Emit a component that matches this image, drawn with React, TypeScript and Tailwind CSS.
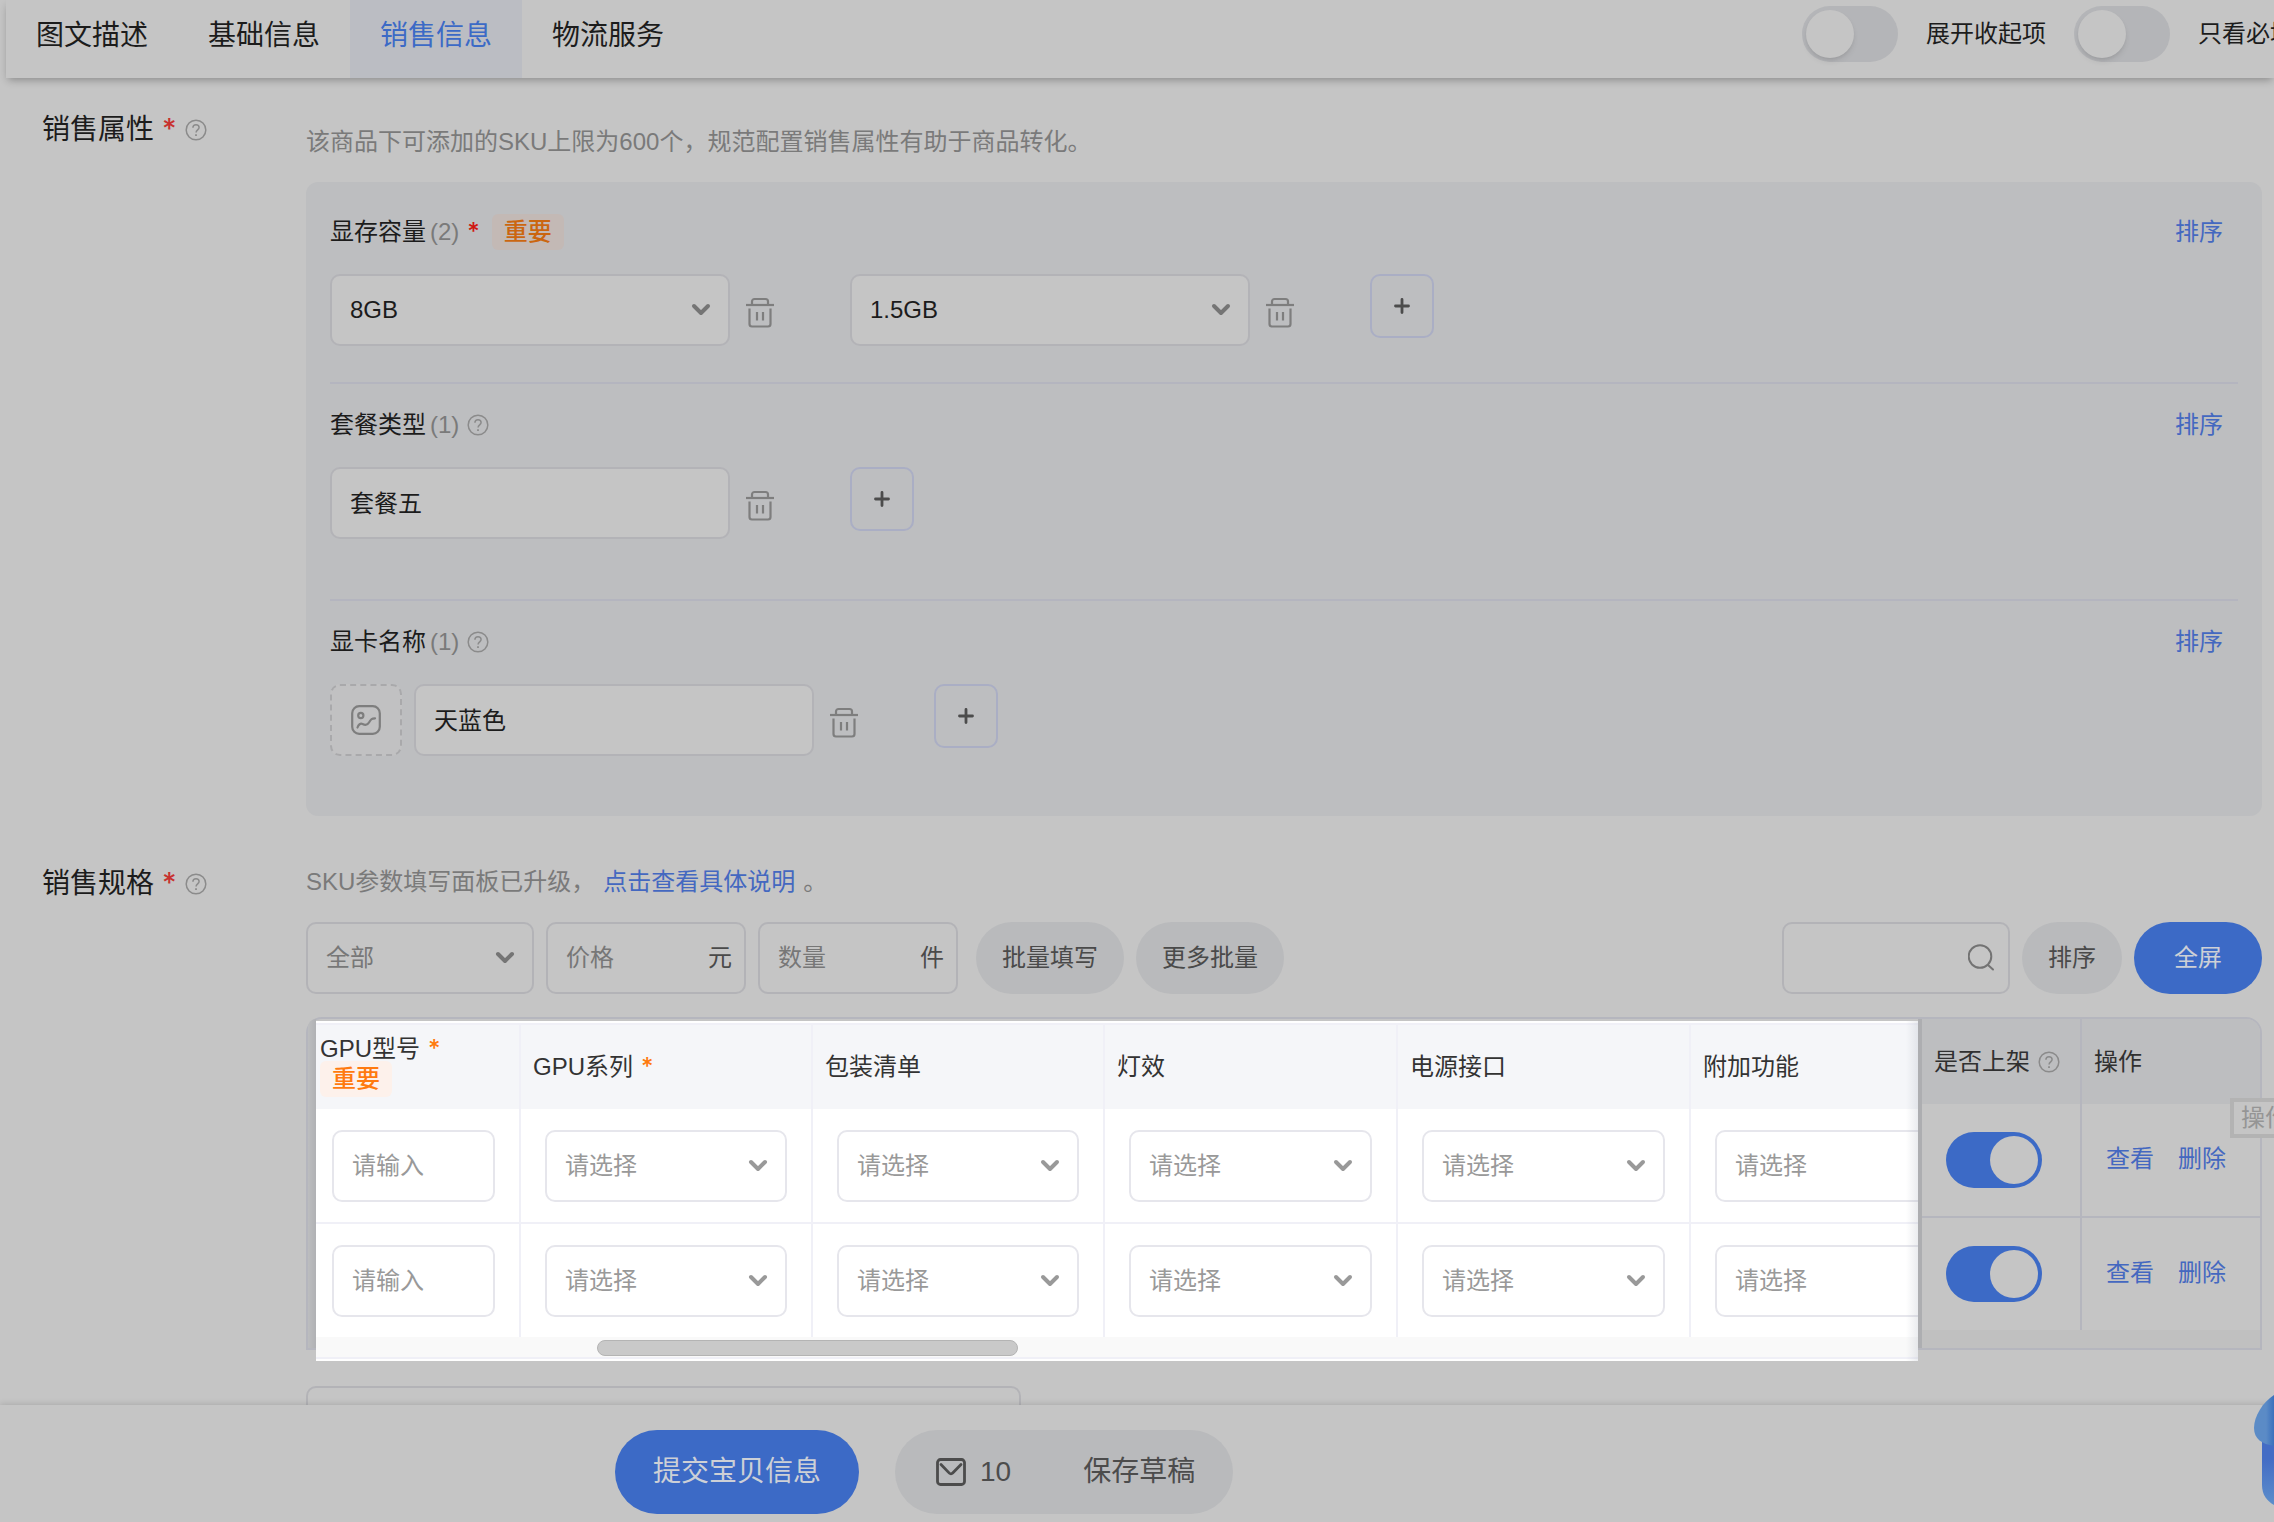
import React, { useState } from 'react';
import clsx from 'clsx';

const FONT = "font-['Liberation_Sans','Noto_Sans_CJK_SC',sans-serif]";

const TABS = ['图文描述', '基础信息', '销售信息', '物流服务'];

const SPEC_COLUMNS = [
  { key: 'gpuModel', label: 'GPU型号', required: true, important: true, type: 'input' },
  { key: 'gpuSeries', label: 'GPU系列', required: true, important: false, type: 'select' },
  { key: 'packing', label: '包装清单', required: false, important: false, type: 'select' },
  { key: 'lighting', label: '灯效', required: false, important: false, type: 'select' },
  { key: 'power', label: '电源接口', required: false, important: false, type: 'select' },
  { key: 'extra', label: '附加功能', required: false, important: false, type: 'select' }
];

const ROWS = [0, 1];

function ChevronIcon({ className = '' }: { className?: string }) {
  return (
    <svg viewBox="0 0 20 14" fill="none" stroke="currentColor" strokeWidth="4" strokeLinecap="round" strokeLinejoin="round" className={clsx('pointer-events-none h-[14px] w-5', className)}>
      <path d="M3 3l7 7 7-7" />
    </svg>
  );
}

function HelpIcon() {
  return (
    <svg viewBox="0 0 22 22" fill="none" stroke="currentColor" strokeWidth="1.5" className="h-[22px] w-[22px] shrink-0 text-[#8b8b8b]">
      <circle cx="11" cy="11" r="9.8" />
      <path d="M7.9 8.8c0-1.9 1.3-3.1 3.1-3.1s3.1 1.1 3.1 2.8c0 2.3-3 2.5-3 5" />
      <path d="M11 15.2v1.8" strokeWidth="1.8" />
    </svg>
  );
}

function TrashIcon() {
  return (
    <svg viewBox="0 0 28 36" fill="none" stroke="currentColor" strokeWidth="2.2" strokeLinejoin="round" className="h-9 w-7">
      <path d="M0 13h28" />
      <path d="M6 13V9.5A2.5 2.5 0 0 1 8.5 7h11A2.5 2.5 0 0 1 22 9.5V13" />
      <path d="M3.5 16.5V32a2.5 2.5 0 0 0 2.500 2.500h16a2.500 2.500 0 0 0 2.500-2.500V16.500" />
      <path d="M11 20v8.500M17 20v8.500" />
    </svg>
  );
}

function PictureIcon() {
  return (
    <svg viewBox="0 0 30 30" fill="none" stroke="currentColor" strokeWidth="2.200" strokeLinecap="round" className="h-[30px] w-[30px]">
      <rect x="1.200" y="1.200" width="27.600" height="27.600" rx="7" />
      <circle cx="9.800" cy="10.500" r="2.600" />
      <path d="M6.500 22.500c1-3 3-4.500 5-3.500s4.500 2 6.500-1.500 3-4 6-4.200" />
    </svg>
  );
}

function SearchIcon() {
  return (
    <svg viewBox="0 0 28 28" fill="none" stroke="currentColor" strokeWidth="2" strokeLinecap="round" className="pointer-events-none absolute right-[14px] top-[21px] h-7 w-7 text-[#737373]">
      <circle cx="12" cy="13.500" r="11.300" />
      <path d="M20 22l5 4.500" />
    </svg>
  );
}

function MailIcon() {
  return (
    <svg viewBox="0 0 30 28" fill="none" stroke="currentColor" strokeWidth="2.800" strokeLinejoin="round" strokeLinecap="round" className="h-7 w-[30px]">
      <rect x="1.500" y="1.500" width="27" height="25" rx="3" />
      <path d="M5 6.500l8.300 8.600a2.400 2.400 0 0 0 3.400 0L25 6.500" />
    </svg>
  );
}

function Star({ className = '' }: { className?: string }) {
  return <span className={clsx("font-['Inter'] font-medium", className)}>*</span>;
}

function Toggle({ label, defaultChecked = false }: { label: string; defaultChecked?: boolean }) {
  return (
    <input
      type="checkbox"
      role="switch"
      aria-label={label}
      defaultChecked={defaultChecked}
      className="block h-14 w-24 shrink-0 cursor-pointer appearance-none rounded-full bg-[#b4b5b8] p-1 before:block before:h-12 before:w-12 before:rounded-full before:bg-[#c5c5c5] before:shadow-md checked:bg-[#3c6ac6] checked:before:ml-10 checked:before:shadow-none"
    />
  );
}

function SelectBox({ label, value, className = '', light = false, muted = false }: { label: string; value: string; className?: string; light?: boolean; muted?: boolean }) {
  return (
    <div className={clsx('relative', className)}>
      <select
        aria-label={label}
        className={clsx(
          'h-[72px] w-full appearance-none rounded-[10px] border-2 pl-[18px] pr-12 text-2xl outline-none',
          light && 'border-[#e6e6ec] bg-white text-[#999]',
          !light && 'border-[#b3b3b7] bg-[#c5c5c5]',
          !light && (muted ? 'text-[#777]' : 'text-[#1c1c1c]')
        )}
      >
        <option>{value}</option>
      </select>
      <ChevronIcon className={clsx('absolute right-[19px] top-[29px]', light ? 'text-[#999]' : 'text-[#757575]')} />
    </div>
  );
}

function TextBox({ label, value }: { label: string; value: string }) {
  return (
    <input
      type="text"
      defaultValue={value}
      aria-label={label}
      className="h-[72px] w-[400px] rounded-[10px] border-2 border-[#b3b3b7] bg-[#c5c5c5] px-[18px] pb-1 text-[#1c1c1c] outline-none"
    />
  );
}

function TrashButton() {
  return (
    <button type="button" aria-label="删除" className="shrink-0 text-[#7e7e7e]">
      <TrashIcon />
    </button>
  );
}

function AddButton() {
  return (
    <button type="button" aria-label="添加" className="flex h-16 w-16 shrink-0 items-center justify-center rounded-[10px] border-2 border-[#aaaec4] text-[#4c4c4c]">
      <svg viewBox="0 0 16 16" stroke="currentColor" strokeWidth="2.800" strokeLinecap="round" className="h-4 w-4">
        <path d="M8 1.500v13M1.500 8h13" />
      </svg>
    </button>
  );
}

function ImportantTag({ light = false }: { light?: boolean }) {
  return (
    <span className={clsx('inline-block h-9 rounded-md px-3 text-2xl font-medium leading-9', light ? 'bg-[#fdf1eb] text-[#ff7a0f]' : 'bg-[#c3b9b5] text-[#cb6610]')}>
      重要
    </span>
  );
}

function PropertyRow({ title, count, required = false, first = false, last = false, children }: { title: string; count: number; required?: boolean; first?: boolean; last?: boolean; children: React.ReactNode }) {
  return (
    <div className={clsx(first ? 'pb-9 pt-8' : 'pb-[60px] pt-[23px]', !last && 'border-b-2 border-[#b4b5bf]')}>
      <div className="mb-6 flex h-9 items-center justify-between pr-[15px]">
        <div className="flex items-center">
          <h3 className="text-[#1c1c1c]">{title}</h3>
          <span className="ml-1 text-[#7a7a7a]">({count})</span>
          {required ? (
            <>
              <Star className="ml-2 mr-3 text-[#d01712]" />
              <ImportantTag />
            </>
          ) : (
            <span className="ml-2"><HelpIcon /></span>
          )}
        </div>
        <button type="button" className="text-[#4468c0]">排序</button>
      </div>
      <div className="flex gap-[76px]">{children}</div>
    </div>
  );
}

function SectionLabel({ children }: { children: React.ReactNode }) {
  return (
    <div className="flex h-10 w-[306px] shrink-0 items-center pl-[42px]">
      <h2 className="text-[28px] text-[#1c1c1c]">{children}</h2>
      <Star className="ml-2 mr-2 text-[28px] text-[#c8322f]" />
      <HelpIcon />
    </div>
  );
}

function UnitField({ label, unit }: { label: string; unit: string }) {
  return (
    <label className="flex h-[72px] w-[200px] items-center rounded-[10px] border-2 border-[#b3b3b7] pl-[18px] pr-3">
      <input type="text" placeholder={label} aria-label={label} className="w-full min-w-0 bg-transparent outline-none placeholder:text-[#777]" />
      <span className="text-[#4a4a4a]">{unit}</span>
    </label>
  );
}

function SpecTable() {
  return (
    <div className="relative z-10 mt-0.5 h-[340px] min-w-0 flex-1 overflow-hidden bg-white pt-0.5">
      <table className="w-[1668px] table-fixed border-separate border-spacing-0">
        <colgroup>
          <col className="w-[205px]" />
          <col className="w-[292px]" />
          <col className="w-[292px]" />
          <col className="w-[293px]" />
          <col className="w-[293px]" />
          <col className="w-[293px]" />
        </colgroup>
        <thead>
          <tr className="h-[86px] bg-[#f5f6f9]">
            {SPEC_COLUMNS.map((col) => (
              <th key={col.key} className={clsx('border-r-2 border-t-2 border-r-[#f0f0f7] border-t-[#f0f0f7] p-0 text-left font-normal text-[#333]', col.important ? 'pl-1' : 'pl-3')}>
                <div className={clsx(col.important && 'leading-6')}>
                  {col.label}
                  {col.required && <Star className="ml-2 text-[#ff7a0f]" />}
                </div>
                {col.important && <ImportantTag light />}
              </th>
            ))}
          </tr>
        </thead>
        <tbody>
          {ROWS.map((row) => (
            <tr key={row} className={row === 0 ? 'h-[115px]' : 'h-[113px]'}>
              {SPEC_COLUMNS.map((col) => (
                <td key={col.key} className={clsx('border-r-2 border-[#f0f0f7] p-0', row === 0 && 'border-b-2', col.type === 'input' ? 'pl-4 pr-6' : 'px-6')}>
                  {col.type === 'input' ? (
                    <input type="text" placeholder="请输入" aria-label={`${col.label}${row + 1}`} className="block h-[72px] w-full rounded-[10px] border-2 border-[#e6e6ec] px-[18px] outline-none placeholder:text-[#999]" />
                  ) : (
                    <SelectBox light label={`${col.label}${row + 1}`} value="请选择" />
                  )}
                </td>
              ))}
            </tr>
          ))}
        </tbody>
      </table>
      <div className="h-[22px] border-b-2 border-[#f0f0f7] bg-[#f9f9f9] pt-[3px]">
        <div className="ml-[281px] h-4 w-[421px] rounded-full border border-[#b4b4b4] bg-[#c9c9c9]" />
      </div>
      <div className="absolute inset-y-0 right-0 w-3 bg-linear-to-r from-transparent to-gray-400/20" />
    </div>
  );
}

// Columns pinned to the right of the spec table
function ActionTable() {
  return (
    <div className="shrink-0">
      <table className="w-[338px] table-fixed border-separate border-spacing-0">
        <colgroup>
          <col className="w-[160px]" />
          <col className="w-[178px]" />
        </colgroup>
        <thead>
          <tr className="h-[85px] text-left text-[#303030]">
            <th className="border-r-2 border-[#b5b6be] bg-[#bdbec0] p-0 pl-3 font-normal">
              <div className="flex items-center gap-2 whitespace-nowrap">
                是否上架
                <HelpIcon />
              </div>
            </th>
            <th className="rounded-tr-[14px] bg-[#bdbec0] p-0 pl-3 font-normal">操作</th>
          </tr>
        </thead>
        <tbody>
          {ROWS.map((row) => (
            <tr key={row} className={row === 0 ? 'h-[114px]' : 'h-[112px]'}>
              <td className={clsx('border-r-2 border-[#b5b6be] p-0 pl-6', row === 0 && 'border-b-2')}>
                <Toggle label="是否上架" defaultChecked />
              </td>
              <td className={clsx('border-[#b5b6be] p-0 pl-6', row === 0 && 'border-b-2')}>
                <div className="flex gap-6 pb-0.5 text-[#4468c0]">
                  <a href="#view">查看</a>
                  <a href="#delete">删除</a>
                </div>
              </td>
            </tr>
          ))}
        </tbody>
      </table>
      <div className="h-[18px] bg-[#c0c0c0]" />
    </div>
  );
}

export default function App() {
  const [activeTab, setActiveTab] = useState('销售信息');

  return (
    <div className={clsx('relative flex h-screen flex-col overflow-hidden bg-[#c5c5c5] text-2xl', FONT)}>
      {/* Tabs */}
      <header className="relative z-20 ml-1.5 flex h-[78px] shrink-0 justify-between bg-[#c5c5c5] shadow-[0_4px_8px_-2px_rgba(0,0,0,0.3)]">
        <nav className="flex">
          {TABS.map((tab) => (
            <button
              key={tab}
              type="button"
              onClick={() => setActiveTab(tab)}
              className={clsx('w-[172px] pb-1.5 text-[28px]', tab === activeTab ? 'bg-[#bbbdc3] text-[#3c6ac6]' : 'text-[#1c1c1c]')}
            >
              {tab}
            </button>
          ))}
        </nav>
        <div className="-mr-11 flex items-center gap-7 whitespace-nowrap pb-2.5 text-[#1c1c1c]">
          <Toggle label="展开收起项" />
          <span>展开收起项</span>
          <Toggle label="只看必填项" />
          <span>只看必填项</span>
        </div>
      </header>

      <main className="min-h-0 flex-1 overflow-hidden">
        {/* Sales attributes */}
        <section className="flex pr-3 pt-8">
          <SectionLabel>销售属性</SectionLabel>
          <div className="min-w-0 flex-1 pt-[14px]">
            <p className="mb-[22px] h-9 leading-9 text-[#7a7a7a]">该商品下可添加的SKU上限为600个，规范配置销售属性有助于商品转化。</p>
            <div className="rounded-xl bg-[#bdbec0] px-6">
              <PropertyRow title="显存容量" count={2} required first>
                <div className="flex items-center gap-4">
                  <SelectBox label="显存容量1" value="8GB" className="w-[400px]" />
                  <TrashButton />
                </div>
                <div className="flex items-center gap-4">
                  <SelectBox label="显存容量2" value="1.5GB" className="w-[400px]" />
                  <TrashButton />
                </div>
                <AddButton />
              </PropertyRow>
              <PropertyRow title="套餐类型" count={1}>
                <div className="flex items-center gap-4">
                  <TextBox label="套餐类型" value="套餐五" />
                  <TrashButton />
                </div>
                <AddButton />
              </PropertyRow>
              <PropertyRow title="显卡名称" count={1} last>
                <div className="flex items-center gap-4">
                  <div className="flex gap-3">
                    <button type="button" aria-label="上传图片" className="flex h-[72px] w-[72px] items-center justify-center rounded-[10px] border-2 border-dashed border-[#a9a9ab] bg-[#c1c1c2] text-[#7e7e7e]">
                      <PictureIcon />
                    </button>
                    <TextBox label="显卡名称" value="天蓝色" />
                  </div>
                  <TrashButton />
                </div>
                <AddButton />
              </PropertyRow>
            </div>
          </div>
        </section>

        {/* Sales specs */}
        <section className="flex pr-3 pt-12">
          <SectionLabel>销售规格</SectionLabel>
          <div className="min-w-0 flex-1">
            <p className="mb-[22px] h-9 leading-9 text-[#7a7a7a]">
              SKU参数填写面板已升级，
              <a href="#guide" className="mx-2 text-[#4468c0]">点击查看具体说明</a>
              。
            </p>

            <div className="mb-[23px] flex items-center justify-between">
              <div className="flex items-center gap-3">
                <SelectBox muted label="规格筛选" value="全部" className="w-[228px]" />
                <UnitField label="价格" unit="元" />
                <UnitField label="数量" unit="件" />
                <button type="button" className="ml-1.5 h-[72px] w-[148px] rounded-full bg-[#b9babc] text-[#4a4a4a]">批量填写</button>
                <button type="button" className="h-[72px] w-[148px] rounded-full bg-[#b9babc] text-[#4a4a4a]">更多批量</button>
              </div>
              <div className="flex items-center gap-3">
                <div className="relative">
                  <input type="search" aria-label="搜索" className="block h-[72px] w-[228px] rounded-[10px] border-2 border-[#b3b3b7] pl-[18px] pr-12 outline-none" />
                  <SearchIcon />
                </div>
                <button type="button" className="h-[72px] w-[100px] rounded-full bg-[#b9babc] text-[#4a4a4a]">排序</button>
                <button type="button" className="h-[72px] w-32 rounded-full bg-[#3c6ac6] text-[#cdd0d6]">全屏</button>
              </div>
            </div>

            <div className="relative flex h-[333px] rounded-t-2xl border-2 border-[#b5b6be]">
              <div className="w-2 shrink-0 rounded-tl-[14px] bg-linear-to-r from-[#bcbdbf] to-[#b0b1b4]" />
              <SpecTable />
              <div className="w-1 shrink-0 bg-[#adaeb1]" />
              <ActionTable />
              <div role="tooltip" className="absolute -right-10 top-[79px] z-20 h-10 whitespace-nowrap border-4 border-[#b3b3b3] bg-[#c5c5c5] px-[7px] leading-8 text-[#959595]">操作</div>
            </div>

            <textarea aria-label="备注" className="mt-9 block h-[72px] w-[715px] resize-none rounded-[10px] border-2 border-[#b3b3b7]" />
          </div>
        </section>
      </main>

      {/* Footer actions */}
      <footer className="relative z-10 flex h-[117px] shrink-0 items-start gap-9 bg-[#c5c5c5] pl-[615px] pt-[25px] text-[28px] shadow-[0_-1px_6px_rgba(0,0,0,0.14)]">
        <button type="button" className="h-[84px] w-[244px] rounded-full bg-[#3c6ac6] text-[#cdd0d6]">提交宝贝信息</button>
        <div className="flex h-[84px] items-center rounded-full bg-[#b9babc] pl-[41px] pr-[38px] text-[#4c4c4c]">
          <button type="button" aria-label="草稿箱" className="flex items-center gap-[14px]">
            <MailIcon />
            10
          </button>
          <button type="button" className="ml-[72px]">保存草稿</button>
        </div>
      </footer>

      {/* Floating assistant, half hidden past the window's edge */}
      <svg viewBox="0 0 20 112" className="absolute bottom-4 right-0 z-30 h-28 w-5">
        <defs>
          <linearGradient id="assistantBody" x1="0" y1="0" x2="0" y2="1">
            <stop offset="0.350" stopColor="#436cc5" />
            <stop offset="1" stopColor="#5c8ecb" />
          </linearGradient>
          <linearGradient id="assistantCap" x1="0" y1="0" x2="1" y2="0">
            <stop offset="0.600" stopColor="#5b8bc6" />
            <stop offset="1" stopColor="#3a70bd" />
          </linearGradient>
        </defs>
        <path d="M8 40h12v71c-7-4-12-10-12-20z" fill="url(#assistantBody)" />
        <path d="M20 1C9 8 0 22 0 34c0 11 8 16 20 18z" fill="url(#assistantCap)" />
      </svg>
    </div>
  );
}
